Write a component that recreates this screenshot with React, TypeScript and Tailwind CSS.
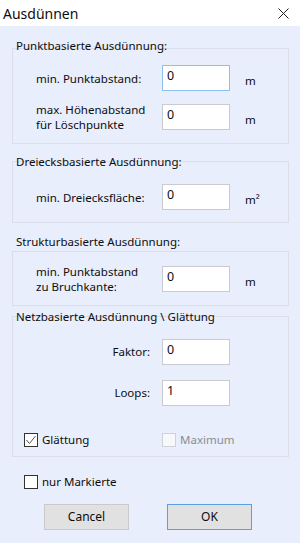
import { ReactNode } from "react";

const Input = ({ value, focused }: { value: string; focused?: boolean }) => (
    <div
        className={`w-[68px] h-[26px] shrink-0 bg-white border pl-[4px] pt-[2px] text-[12.5px] leading-[16px] ${
            focused ? "border-[#8cc1ee]" : "border-[#c9cbd0]"
        }`}
    >
        {value}
    </div>
);

const Field = ({ label, value, unit, focused }: { label: ReactNode; value: string; unit: ReactNode; focused?: boolean }) => (
    <div className="flex items-center pl-[23px]">
        <div className="w-[126px] shrink-0 leading-[15px]">{label}</div>
        <Input value={value} focused={focused} />
        <span className="ml-[15px] mt-[5px]">{unit}</span>
    </div>
);

const SmallField = ({ label, value }: { label: string; value: string }) => (
    <div className="flex items-center pl-[23px]">
        <div className="w-[114px] mr-[12px] text-right">{label}</div>
        <Input value={value} />
    </div>
);

const Check = ({ checked, disabled }: { checked?: boolean; disabled?: boolean }) => (
    <div
        className={`w-[14px] h-[14px] shrink-0 border flex items-center justify-center ${
            disabled ? "border-[#cfd2d8] bg-[#f7f8fb]" : "border-[#333333] bg-white"
        }`}
    >
        {checked && (
            <svg width="12" height="12" viewBox="0 0 12 12">
                <path d="M1.5 6 L4.5 9.5 L10.5 2" fill="none" stroke="#555" strokeWidth="1" />
            </svg>
        )}
    </div>
);

const Group = ({ title, className, labelGap, children }: { title: string; className: string; labelGap: string; children: ReactNode }) => (
    <div>
        <div className="pl-[16px] h-[16px] leading-[16px]">{title}</div>
        <div className={`ml-[12px] w-[277px] border border-[#d9dee9] ${labelGap} ${className}`}>{children}</div>
    </div>
);

export default function App() {
    return (
        <div className="w-[300px] h-[543px] bg-[#e8eefb] text-[11.5px] text-[#0d0d0d] font-['Noto_Sans',sans-serif] overflow-hidden">
            <div className="h-[26px] bg-white flex items-center justify-between pl-[3px] pr-[11px]">
                <span className="text-[14px] mt-[1px]">Ausdünnen</span>
                <svg width="11" height="11" viewBox="0 0 11 11">
                    <path d="M0.5 0.5 L10.5 10.5 M10.5 0.5 L0.5 10.5" stroke="#222" strokeWidth="1" />
                </svg>
            </div>

            <div className="pt-[12px]">
                <Group title="Punktbasierte Ausdünnung:" labelGap="-mt-[6px]" className="h-[96px] pt-[16px] flex flex-col gap-[11px]">
                    <Field label="min. Punktabstand:" value="0" unit="m" focused />
                    <Field label={<>max. Höhenabstand<br />für Löschpunkte</>} value="0" unit="m" />
                </Group>
            </div>

            <div className="mt-[10px]">
                <Group title="Dreiecksbasierte Ausdünnung:" labelGap="-mt-[9px]" className="h-[62px] pt-[22px]">
                    <Field label="min. Dreiecksfläche:" value="0" unit="m²" />
                </Group>
            </div>

            <div className="mt-[11px]">
                <Group title="Strukturbasierte Ausdünnung:" labelGap="mt-[1px]" className="h-[55px] pt-[12px]">
                    <Field label={<>min. Punktabstand<br />zu Bruchkante:</>} value="0" unit="m" />
                </Group>
            </div>

            <div className="mt-[3px]">
                <Group title="Netzbasierte Ausdünnung \ Glättung" labelGap="-mt-[9px]" className="h-[141px] pt-[22px]">
                    <SmallField label="Faktor:" value="0" />
                    <div className="mt-[15px]">
                        <SmallField label="Loops:" value="1" />
                    </div>
                    <div className="flex items-center mt-[25px] pl-[11px]">
                        <div className="flex items-center gap-[4px] w-[138px]">
                            <Check checked />
                            <span>Glättung</span>
                        </div>
                        <div className="flex items-center gap-[4px] text-[#8a8d93]">
                            <Check disabled />
                            <span>Maximum</span>
                        </div>
                    </div>
                </Group>
            </div>

            <div className="flex items-center gap-[4px] ml-[24px] mt-[16px]">
                <Check />
                <span>nur Markierte</span>
            </div>

            <div className="flex gap-[38px] ml-[44px] mt-[14px] text-[12px]">
                <button className="w-[85px] h-[26px] bg-[#e1e1e1] border border-[#cacaca]">Cancel</button>
                <button className="w-[85px] h-[26px] bg-[#e1e1e1] border border-[#5a9fe4]">OK</button>
            </div>
        </div>
    );
}
